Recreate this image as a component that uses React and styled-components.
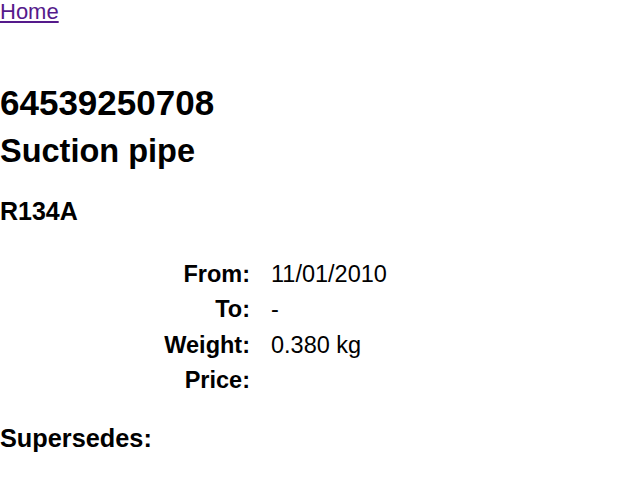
import { Fragment } from "react";
import styled, { createGlobalStyle } from "styled-components";

const GlobalStyle = createGlobalStyle`
  html, body {
    margin: 0;
    padding: 0;
    background: #ffffff;
  }
  body {
    font-family: "Liberation Sans", Arial, Helvetica, sans-serif;
    color: #000000;
  }
`;

/* PAGE */
const Page = styled.div`
  display: flex;
  flex-direction: column;
`;

const HomeLink = styled.a`
  display: block;
  align-self: flex-start;
  font-size: 22px;
  line-height: 24px;
  color: #551a8b;
  text-decoration: underline;
`;

/* HEADINGS */
const PartNumber = styled.h1`
  margin: 59px 0 0;
  font-size: 35px;
  line-height: 40px;
  font-weight: bold;
`;

const PartName = styled.h2`
  margin: 8px 0 0;
  font-size: 32.5px;
  line-height: 40px;
  font-weight: bold;
`;

const Section = styled.h3`
  margin: ${(p) => p.$top}px 0 0;
  font-size: ${(p) => p.$size}px;
  line-height: 28px;
  font-weight: bold;
`;

/* DETAILS */
const Details = styled.dl`
  display: grid;
  grid-template-columns: 250px auto;
  column-gap: 21px;
  margin: 32px 0 0;
  font-size: 23.5px;
  line-height: 35.33px;
`;

const Label = styled.dt`
  font-weight: bold;
  text-align: right;
`;

const Value = styled.dd`
  margin: 0;
`;

const details = [
  { label: "From:", value: "11/01/2010" },
  { label: "To:", value: "-" },
  { label: "Weight:", value: "0.380 kg" },
  { label: "Price:", value: "" },
];

const App = () => {
  return (
    <Page>
      <GlobalStyle />
      <HomeLink href="#">Home</HomeLink>
      <PartNumber>64539250708</PartNumber>
      <PartName>Suction pipe</PartName>
      <Section $top={26} $size={25}>R134A</Section>

      <Details>
        {details.map((d) => (
          <Fragment key={d.label}>
            <Label>{d.label}</Label>
            <Value>{d.value}</Value>
          </Fragment>
        ))}
      </Details>

      <Section $top={26} $size={25.3}>Supersedes:</Section>
    </Page>
  );
};

export default App;
